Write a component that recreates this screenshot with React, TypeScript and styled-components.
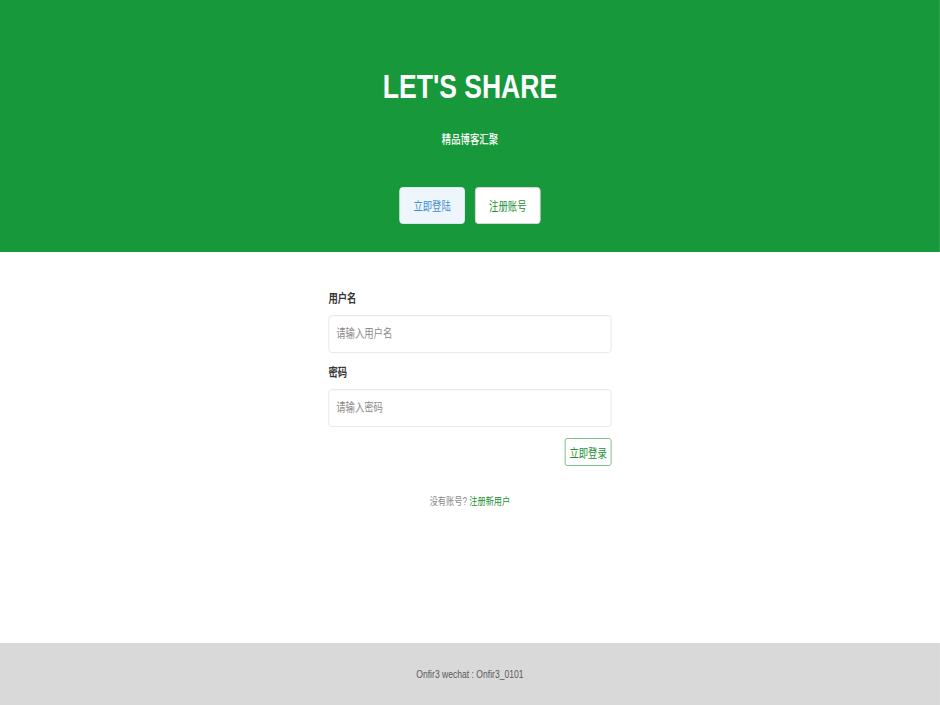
import React from "react";
import styled, { createGlobalStyle } from "styled-components";

const GlobalStyle = createGlobalStyle`
  html, body { margin: 0; padding: 0; background: #ffffff; overflow: hidden; }
  body { font-family: "Liberation Sans", Arial, "Noto Sans CJK SC", sans-serif; }
  * { box-sizing: border-box; }
`;

/* The reference is horizontally squeezed; the whole page is laid out at
   its natural width and compressed along x. */
const Stage = styled.div`
  width: 1205px;
  min-height: 705px;
  transform: scaleX(0.78);
  transform-origin: 0 0;
  display: flex;
  flex-direction: column;
`;

const Hero = styled.header`
  height: 252px;
  background: #17993b;
  display: flex;
  flex-direction: column;
  align-items: center;
  padding-top: 66px;
`;

const Title = styled.h1`
  margin: 0;
  font-family: "Liberation Sans", Arial, sans-serif;
  font-weight: 700;
  font-size: 34px;
  line-height: 40px;
  color: #ffffff;
`;

const Subtitle = styled.p`
  margin: 25px 0 0;
  font-size: 12px;
  line-height: 18px;
  color: #ffffff;
  font-weight: 500;
`;

const ButtonRow = styled.div`
  margin-top: 38px;
  display: flex;
  gap: 13px;
`;

const HeroButton = styled.button<{ $variant: "info" | "plain" }>`
  height: 37px;
  padding: 0 17px;
  border-radius: 4px;
  font-family: "Liberation Sans", "Noto Sans CJK SC", sans-serif;
  font-size: 12px;
  cursor: pointer;
  border: 1px solid ${(p) => (p.$variant === "info" ? "#e3eef9" : "#dbdbdb")};
  background: ${(p) => (p.$variant === "info" ? "#eef6fc" : "#ffffff")};
  color: ${(p) => (p.$variant === "info" ? "#3e8ed0" : "#258f34")};
`;

const Main = styled.main`
  flex: 1;
  display: flex;
  flex-direction: column;
  align-items: center;
  padding-top: 38px;
`;

const Form = styled.form`
  width: 363px;
  display: flex;
  flex-direction: column;
`;

const Label = styled.label<{ $first?: boolean }>`
  display: block;
  margin-top: ${(p) => (p.$first ? "0" : "11px")};
  font-size: 12px;
  line-height: 18px;
  font-weight: 700;
  color: #363636;
`;

const Input = styled.input`
  margin-top: 7px;
  height: 38px;
  width: 100%;
  padding: 0 9px;
  border: 1px solid #e6e6e6;
  border-radius: 4px;
  background: #ffffff;
  font-family: "Liberation Sans", "Noto Sans CJK SC", sans-serif;
  font-size: 12px;
  color: #363636;
  box-shadow: inset 0 1px 2px rgba(10, 10, 10, 0.03);
  outline: none;
  &::placeholder { color: #8a8a8a; }
`;

const Actions = styled.div`
  margin-top: 11px;
  display: flex;
  justify-content: flex-end;
`;

const SubmitButton = styled.button`
  height: 28px;
  padding: 0 5px;
  border: 1px solid #6cbb7a;
  border-radius: 3px;
  background: #ffffff;
  color: #258f34;
  font-family: "Liberation Sans", "Noto Sans CJK SC", sans-serif;
  font-size: 12px;
  cursor: pointer;
`;

const Hint = styled.p`
  margin: 27px 0 0;
  font-size: 10.5px;
  line-height: 16px;
  color: #8a8a8a;
  text-align: center;
`;

const HintLink = styled.a`
  color: #258f34;
  text-decoration: none;
`;

const Footer = styled.footer`
  height: 62px;
  background: #d9d9d9;
  display: flex;
  align-items: center;
  justify-content: center;
  font-size: 11px;
  color: #5a5a5a;
`;

export default function App() {
  return (
    <>
      <GlobalStyle />
      <Stage>
        <Hero>
          <Title>LET'S SHARE</Title>
          <Subtitle>精品博客汇聚</Subtitle>
          <ButtonRow>
            <HeroButton $variant="info">立即登陆</HeroButton>
            <HeroButton $variant="plain">注册账号</HeroButton>
          </ButtonRow>
        </Hero>
        <Main>
          <Form onSubmit={(e) => e.preventDefault()}>
            <Label $first htmlFor="username">用户名</Label>
            <Input id="username" placeholder="请输入用户名" />
            <Label htmlFor="password">密码</Label>
            <Input id="password" type="password" placeholder="请输入密码" />
            <Actions>
              <SubmitButton type="submit">立即登录</SubmitButton>
            </Actions>
          </Form>
          <Hint>
            没有账号? <HintLink href="#">注册新用户</HintLink>
          </Hint>
        </Main>
        <Footer>Onfir3 wechat : Onfir3_0101</Footer>
      </Stage>
    </>
  );
}
